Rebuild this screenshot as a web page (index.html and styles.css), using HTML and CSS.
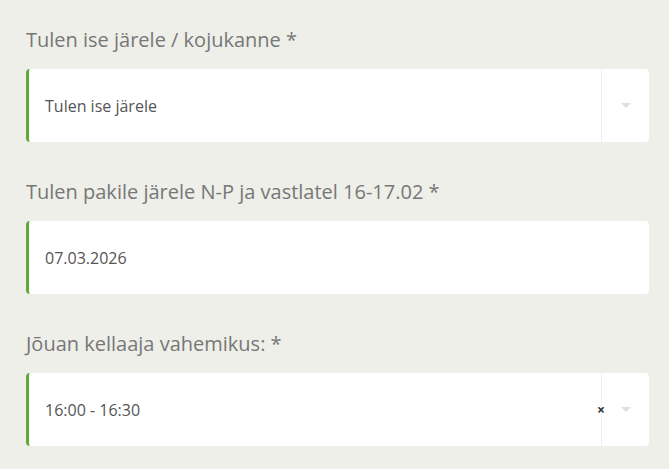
FILE: index.html
```html
<!DOCTYPE html>
<html lang="et">
<head>
    <meta charset="UTF-8">
    <meta name="viewport" content="width=device-width, initial-scale=1.0">
    <title>Tellimus</title>
    <link rel="stylesheet" href="styles.css">
</head>
<body>
    <div class="form">
        <div class="field">
            <label class="label">Tulen ise järele / kojukanne *</label>
            <div class="box select">
                <span class="value">Tulen ise järele</span>
                <span class="arrow"></span>
            </div>
        </div>
        <div class="field">
            <label class="label">Tulen pakile järele N-P ja vastlatel 16-17.02 *</label>
            <div class="box">
                <span class="value">07.03.2026</span>
            </div>
        </div>
        <div class="field">
            <label class="label">Jõuan kellaaja vahemikus: *</label>
            <div class="box select">
                <span class="value">16:00 - 16:30</span>
                <span class="clear">&times;</span>
                <span class="arrow"></span>
            </div>
        </div>
    </div>
</body>
</html>
```

FILE: styles.css
```css
* {
    margin: 0;
    padding: 0;
    box-sizing: border-box;
}
body {
    font-family: "Open Sans", Arial, sans-serif;
    background-color: #eeefe9;
}
.form {
    padding: 27px 20px 0 26px;
}
.field {
    margin-bottom: 37px;
}
.label {
    display: block;
    font-size: 20px;
    line-height: 26px;
    color: #777;
    margin-bottom: 16px;
}
.box {
    position: relative;
    display: flex;
    align-items: center;
    height: 73px;
    background: #fff;
    border-left: 3px solid #5fa83a;
    border-radius: 4px;
    padding-left: 16px;
}
.value {
    flex: 1;
    font-size: 16px;
    color: #555;
}
.arrow {
    align-self: stretch;
    width: 48px;
    border-left: 1px solid #f0f0f0;
    display: flex;
    align-items: center;
    justify-content: center;
}
.arrow::after {
    content: "";
    border-left: 5px solid transparent;
    border-right: 5px solid transparent;
    border-top: 5px solid #e0e0e0;
}
.clear {
    position: absolute;
    right: 44px;
    top: 50%;
    transform: translateY(-50%);
    font-size: 14px;
    font-weight: bold;
    color: #333;
    line-height: 1;
}
```
